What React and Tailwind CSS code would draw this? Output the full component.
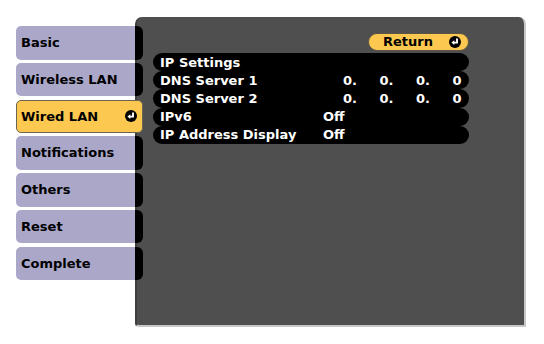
import React from 'react';

const tabs = ['Basic', 'Wireless LAN', 'Wired LAN', 'Notifications', 'Others', 'Reset', 'Complete'];

const rows = [
  { label: 'IP Settings', value: null },
  { label: 'DNS Server 1', value: 'ip' },
  { label: 'DNS Server 2', value: 'ip' },
  { label: 'IPv6', value: 'Off' },
  { label: 'IP Address Display', value: 'Off' },
];

// black disc with the white "enter" arrow
const EnterIcon = () => (
  <svg width="12" height="12" viewBox="0 0 12 12" className="shrink-0">
    <circle cx="6" cy="6" r="6" fill="#000" />
    <path d="M8 2.4 V6.6 H4.4" stroke="#fff" strokeWidth="1.9" fill="none" />
    <path d="M5.3 4.2 L2.4 6.6 L5.3 9 Z" fill="#fff" />
  </svg>
);

const App = () => {
  return (
    <div
      className="w-[544px] h-[344px] bg-white overflow-hidden font-bold"
      style={{ fontFamily: '"DejaVu Sans", Verdana, sans-serif' }}
    >
      <div className="flex pt-[17px] pl-4">
        {/* Menu tabs */}
        <div className="relative z-10 -mr-2 mt-[9px] flex flex-col gap-[3.3px] w-[127px]">
          {tabs.map((tab) =>
            tab === 'Wired LAN' ? (
              <div
                key={tab}
                className="h-[33.5px] flex items-center justify-between pl-[4px] pr-[5px] bg-[#fcc84f] border border-[#6b6452] rounded-[5px] text-[13px] text-black"
              >
                <span>{tab}</span>
                <EnterIcon />
              </div>
            ) : (
              <div key={tab} className="h-[33.5px] flex">
                <div className="flex-1 flex items-center pl-[5px] bg-[#aaa7c9] rounded-l-[5px] text-[13px] text-black">
                  {tab}
                </div>
                <div className="w-2 bg-black rounded-r-[6px]" />
              </div>
            )
          )}
        </div>

        {/* Settings panel */}
        <div className="w-[391px] h-[310px] bg-[#4f4f4f] rounded-t-[7px] rounded-bl-[4px] border-l-2 border-[#3e3e3e] border-r-2 border-r-[#c8c8c8] border-b-2 border-b-[#c8c8c8] pt-4 pl-4 pr-[55px]">
          <div className="flex justify-end">
            <div className="w-[101px] h-[18px] flex items-center justify-between pl-[14px] pr-[7px] bg-[#fcc84f] border border-[#5a5446] rounded-full text-[13px] text-black">
              <span>Return</span>
              <EnterIcon />
            </div>
          </div>
          <div className="mt-[2px] flex flex-col">
            {rows.map((row) => (
              <div
                key={row.label}
                className="h-[18.2px] flex items-center bg-black rounded-full pl-[7px] pr-[5px] text-[13px] text-white leading-none"
              >
                <span className="w-[163px] shrink-0">{row.label}</span>
                {row.value === 'ip' ? (
                  <div className="flex ml-5">
                    <span className="w-[36.5px]">0.</span>
                    <span className="w-[36.5px]">0.</span>
                    <span className="w-[36.5px]">0.</span>
                    <span>0</span>
                  </div>
                ) : (
                  row.value && <span>{row.value}</span>
                )}
              </div>
            ))}
          </div>
        </div>
      </div>
    </div>
  );
};

export default App;
